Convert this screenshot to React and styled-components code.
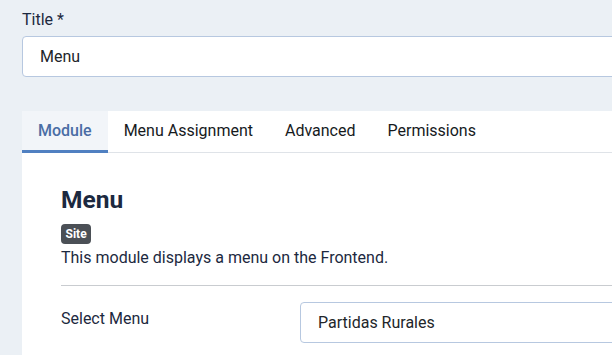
import React from "react";
import styled, { createGlobalStyle } from "styled-components";

const GlobalStyle = createGlobalStyle`
  * { box-sizing: border-box; }
  html, body {
    margin: 0;
    padding: 0;
    background: #ebf0f5;
    font-family: Roboto, "Liberation Sans", Arial, sans-serif;
    color: #22262a;
    overflow: hidden;
  }
`;

const Page = styled.div`
  padding: 8px 0 0 22px;
  width: 640px;
`;

const FieldLabel = styled.label`
  display: block;
  font-size: 16px;
  line-height: 24px;
  color: #1c2940;
  margin-bottom: 4px;
`;

const TextInput = styled.div`
  height: 41px;
  display: flex;
  align-items: center;
  padding: 0 17px;
  background: #fff;
  border: 1px solid #b7c8e0;
  border-radius: 4px;
  font-size: 16px;
  color: #22262a;
`;

const Panel = styled.section`
  margin-top: 34px;
  background: #fff;
`;

const TabList = styled.nav`
  display: flex;
  border-bottom: 1px solid #dfe3e8;
`;

const Tab = styled.div`
  height: 42px;
  margin-bottom: -1px;
  padding: 0 16px;
  display: flex;
  align-items: center;
  font-size: 16px;
  color: ${p => (p.$active ? "#4a6da5" : "#161a1d")};
  font-weight: ${p => (p.$active ? 500 : 400)};
  background: ${p => (p.$active ? "#f2f5f9" : "transparent")};
  border-bottom: 3px solid ${p => (p.$active ? "#5080c1" : "transparent")};
`;

const Body = styled.div`
  padding: 32px 0 20px 39px;
`;

const Heading = styled.h2`
  margin: 0;
  font-size: 24.5px;
  line-height: 29px;
  font-weight: 700;
  color: #1c2940;
`;

const Badge = styled.span`
  display: inline-flex;
  align-items: center;
  height: 20px;
  margin-top: 10px;
  padding: 0 4.5px;
  border-radius: 4px;
  background: #4b5056;
  color: #fff;
  font-size: 12px;
  font-weight: 700;
`;

const Description = styled.p`
  margin: 2px 0 0;
  font-size: 16px;
  line-height: 24px;
  color: #1c2940;
`;

const Divider = styled.hr`
  margin: 15px 0 16px;
  border: 0;
  border-top: 1px solid #c9ccd0;
`;

const Row = styled.div`
  display: grid;
  grid-template-columns: 239px 1fr;
  align-items: start;
`;

const RowLabel = styled.div`
  padding-top: 5px;
  font-size: 16px;
  line-height: 24px;
  color: #1c2940;
`;

const Select = styled(TextInput)`
  padding: 0 17px;
`;

const tabs = ["Module", "Menu Assignment", "Advanced", "Permissions"];

export default function App() {
  return (
    <>
      <GlobalStyle />
      <Page>
        <FieldLabel>Title *</FieldLabel>
        <TextInput>Menu</TextInput>
        <Panel>
          <TabList>
            {tabs.map((t, i) => (
              <Tab key={t} $active={i === 0}>{t}</Tab>
            ))}
          </TabList>
          <Body>
            <Heading>Menu</Heading>
            <Badge>Site</Badge>
            <Description>This module displays a menu on the Frontend.</Description>
            <Divider />
            <Row>
              <RowLabel>Select Menu</RowLabel>
              <Select>Partidas Rurales</Select>
            </Row>
          </Body>
        </Panel>
      </Page>
    </>
  );
}
